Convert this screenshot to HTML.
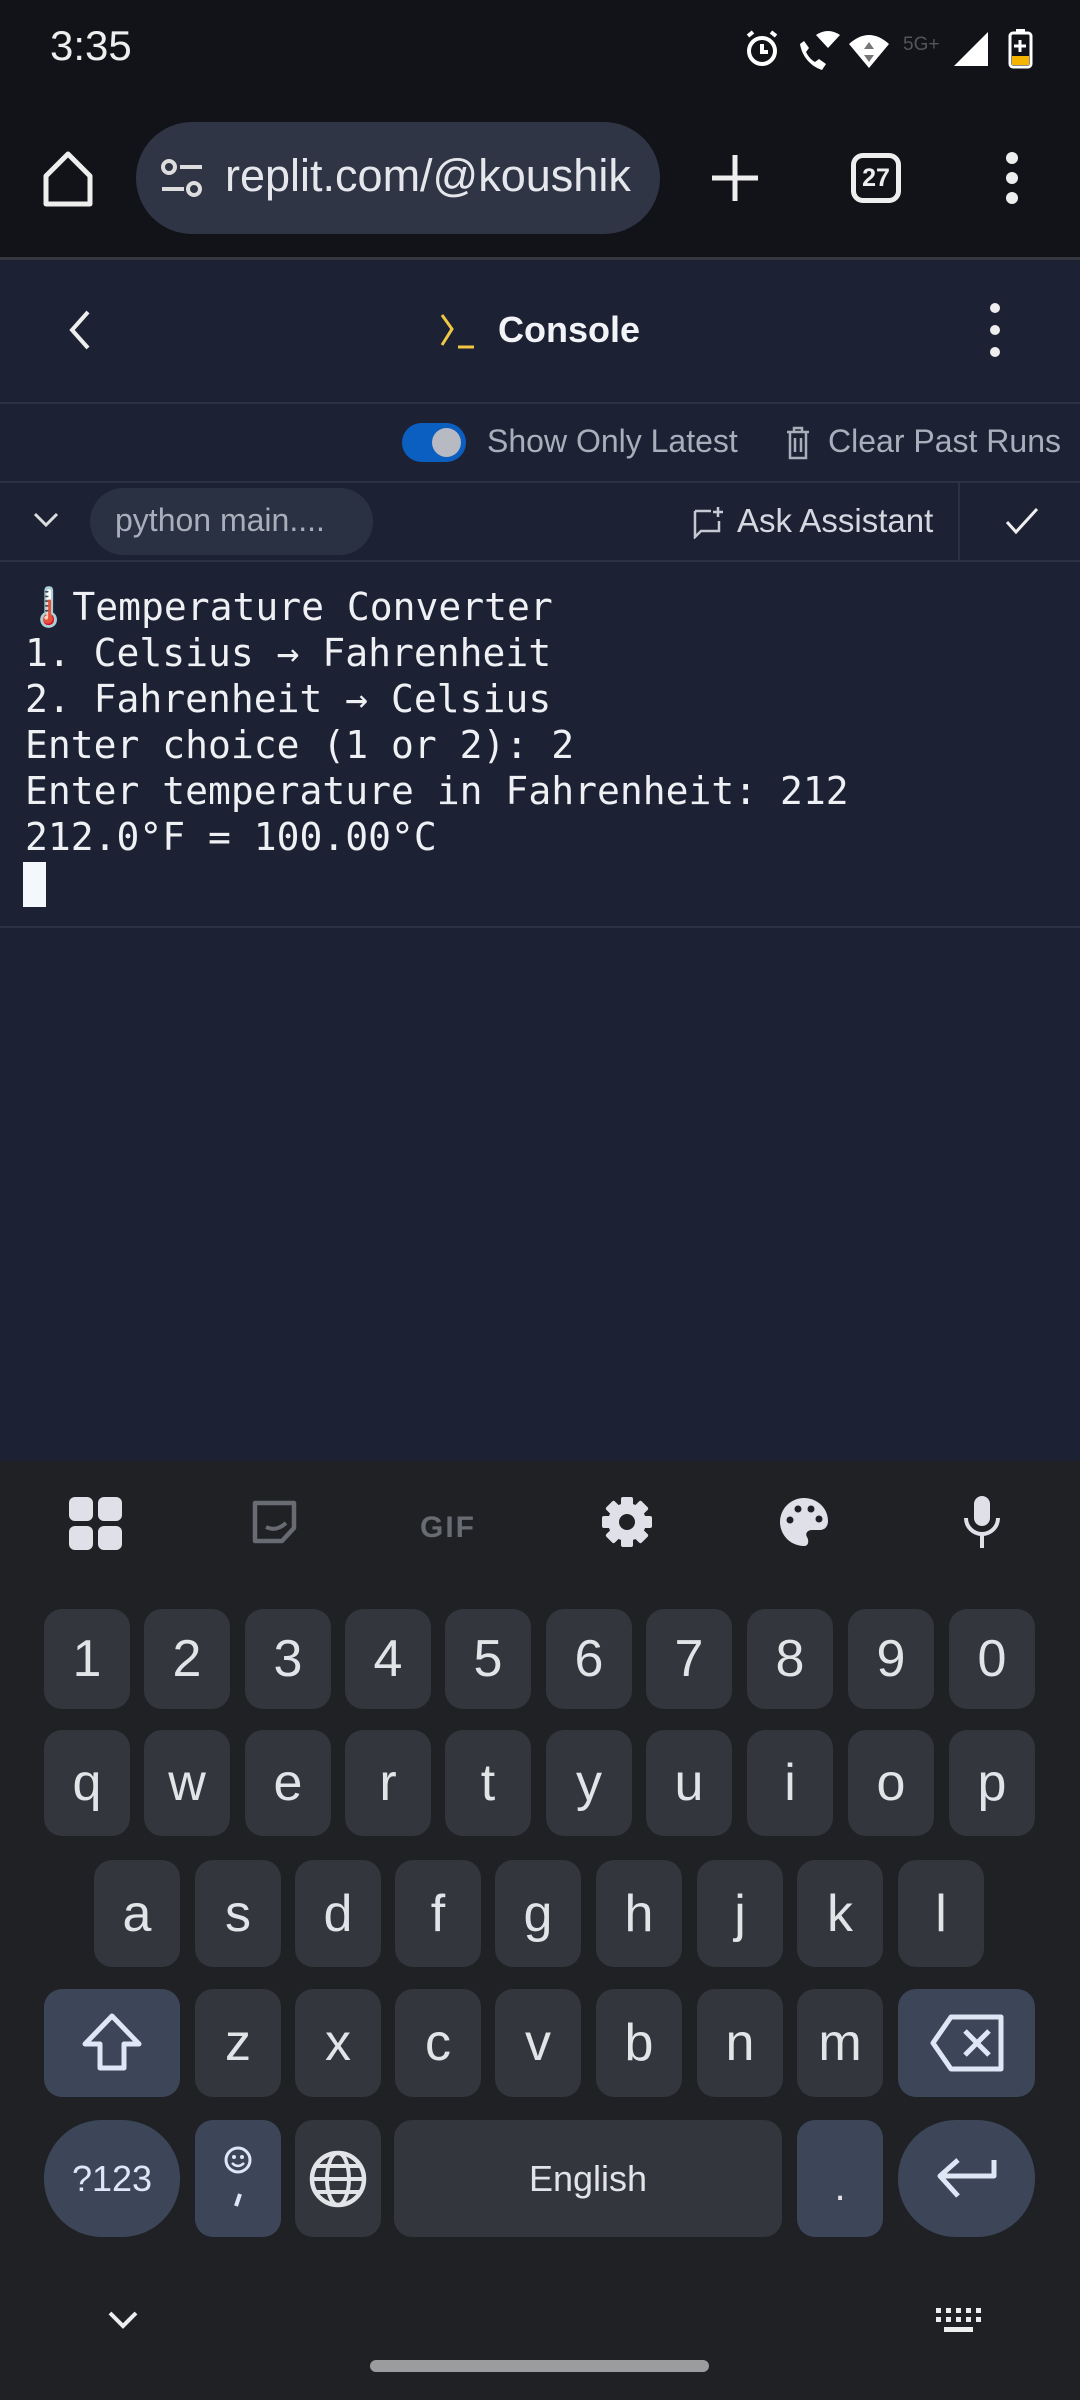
<!DOCTYPE html>
<html><head><meta charset="utf-8"><style>
*{margin:0;padding:0;box-sizing:border-box}
body{width:1080px;height:2400px;background:#1f2125;position:relative;overflow:hidden;font-family:"Liberation Sans",sans-serif}
.a{position:absolute}
.key{position:absolute;background:#33363c;border-radius:18px;color:#e3e4e8;font-size:52px;display:flex;align-items:center;justify-content:center}
.sp{background:#3c4658}
.mono{font-family:"DejaVu Sans Mono","Liberation Mono",monospace;font-size:38px;color:#eef0f4;line-height:46px;white-space:pre}
</style></head><body>
<div class="a" style="left:0;top:0;width:1080px;height:257px;background:#111318"></div>
<div class="a" style="left:50px;top:22px;color:#eee;font-size:42px">3:35</div>
<svg class="a" style="left:735px;top:26px" width="310" height="48" viewBox="735 26 310 48">
 <circle cx="762" cy="51" r="13" fill="none" stroke="#fff" stroke-width="4"/><path d="M762 44v8h6M748 36l5-4M776 36l-5-4" stroke="#fff" stroke-width="4" fill="none"/>
 <path d="M800 44c2 12 10 22 22 26l4-6-7-5-4 3c-4-2-7-6-9-10l3-4-5-7z" fill="#fff"/><path d="M816 35q12-8 24 0l-12 13z" fill="#fff"/>
 <path d="M849 44q20-18 40 0l-20 24z" fill="#fff"/><path d="M869 42l5 7h-10zM869 62l5-7h-10z" fill="#777"/>
 <text x="903" y="50" fill="#555" font-size="19" font-family="Liberation Sans">5G+</text>
 <path d="M954 66l34-34v34z" fill="#fff"/>
 <rect x="1010" y="33" width="21" height="34" rx="3" fill="none" stroke="#fff" stroke-width="3"/><rect x="1016" y="29" width="9" height="5" fill="#fff"/><rect x="1012" y="56" width="17" height="9" fill="#f5b400"/><path d="M1020 40v12M1014 46h12" stroke="#fff" stroke-width="3"/>
</svg>
<svg class="a" style="left:40px;top:148px" width="56" height="60" viewBox="0 0 56 60"><path d="M6 56V28L28 6l22 22v28z" fill="none" stroke="#eee" stroke-width="5" stroke-linejoin="round"/></svg>
<div class="a" style="left:136px;top:122px;width:524px;height:112px;border-radius:56px;background:#2f3544"></div>
<svg class="a" style="left:160px;top:158px" width="44" height="40" viewBox="0 0 44 40"><circle cx="9" cy="9" r="6" fill="none" stroke="#ddd" stroke-width="4"/><path d="M20 9h22M2 31h22" stroke="#ddd" stroke-width="4"/><circle cx="34" cy="31" r="6" fill="none" stroke="#ddd" stroke-width="4"/></svg>
<div class="a" style="left:225px;top:150px;color:#e6e7ec;font-size:45px">replit.com/@koushik</div>
<svg class="a" style="left:710px;top:153px" width="50" height="50"><path d="M25 2v46M2 25h46" stroke="#eee" stroke-width="5"/></svg>
<div class="a" style="left:851px;top:153px;width:50px;height:50px;border:5px solid #eee;border-radius:12px;color:#eee;font-size:25px;font-weight:bold;text-align:center;line-height:40px">27</div>
<svg class="a" style="left:1000px;top:150px" width="24" height="56"><circle cx="12" cy="8" r="6" fill="#eee"/><circle cx="12" cy="28" r="6" fill="#eee"/><circle cx="12" cy="48" r="6" fill="#eee"/></svg>
<div class="a" style="left:0;top:257px;width:1080px;height:3px;background:#34373d"></div>
<div class="a" style="left:0;top:260px;width:1080px;height:1201px;background:#1c2233"></div>
<svg class="a" style="left:64px;top:308px" width="30" height="44"><path d="M24 4L8 22l16 18" fill="none" stroke="#eee" stroke-width="4"/></svg>
<svg class="a" style="left:440px;top:313px" width="40" height="40"><path d="M2 2l10 14-10 16" fill="none" stroke="#f2c744" stroke-width="3"/><path d="M18 34h16" stroke="#f2c744" stroke-width="3"/></svg>
<div class="a" style="left:498px;top:309px;color:#f2f3f6;font-size:36px;font-weight:bold">Console</div>
<svg class="a" style="left:984px;top:300px" width="24" height="60"><circle cx="11" cy="8" r="5" fill="#eee"/><circle cx="11" cy="30" r="5" fill="#eee"/><circle cx="11" cy="52" r="5" fill="#eee"/></svg>
<div class="a" style="left:0;top:402px;width:1080px;height:2px;background:#2b3243"></div>
<div class="a" style="left:402px;top:423px;width:64px;height:39px;border-radius:20px;background:#0b5fc0"></div>
<div class="a" style="left:432px;top:428px;width:29px;height:29px;border-radius:50%;background:#b7bac2"></div>
<div class="a" style="left:487px;top:423px;color:#a9aebb;font-size:32px">Show Only Latest</div>
<svg class="a" style="left:784px;top:425px" width="28" height="36"><path d="M3 7h22M10 7V3h8v4M6 7v26h16V7M11 13v14M17 13v14" fill="none" stroke="#a9aebb" stroke-width="2.5"/></svg>
<div class="a" style="left:828px;top:423px;color:#a9aebb;font-size:32px">Clear Past Runs</div>
<div class="a" style="left:0;top:481px;width:1080px;height:2px;background:#2b3243"></div>
<svg class="a" style="left:32px;top:510px" width="28" height="20"><path d="M3 4l11 11 11-11" fill="none" stroke="#ddd" stroke-width="3"/></svg>
<div class="a" style="left:90px;top:488px;width:283px;height:67px;border-radius:34px;background:#2a3142"></div>
<div class="a" style="left:115px;top:502px;color:#a9aebb;font-size:32px">python main....</div>
<svg class="a" style="left:692px;top:505px" width="32" height="34"><path d="M3 6h16M3 6v26l6-6h18V16" fill="none" stroke="#c5c9d3" stroke-width="2.5"/><path d="M26 2v10M21 7h10" stroke="#c5c9d3" stroke-width="2.5"/></svg>
<div class="a" style="left:737px;top:502px;color:#d5d8e0;font-size:33px">Ask Assistant</div>
<div class="a" style="left:958px;top:483px;width:2px;height:78px;background:#2b3243"></div>
<svg class="a" style="left:1004px;top:506px" width="36" height="30"><path d="M3 16l9 10 21-23" fill="none" stroke="#eee" stroke-width="3"/></svg>
<div class="a" style="left:0;top:560px;width:1080px;height:2px;background:#2b3243"></div>
<div class="a mono" style="left:25px;top:584px">🌡️Temperature Converter
1. Celsius → Fahrenheit
2. Fahrenheit → Celsius
Enter choice (1 or 2): 2
Enter temperature in Fahrenheit: 212
212.0°F = 100.00°C</div>
<div class="a" style="left:23px;top:862px;width:23px;height:45px;background:#f4f7fb"></div>
<div class="a" style="left:0;top:926px;width:1080px;height:2px;background:#2b3243"></div>
<svg class="a" style="left:0;top:1490px" width="1080" height="70" viewBox="0 1490 1080 70">
 <rect x="69" y="1497" width="24" height="24" rx="6" fill="#e0e1e8"/><rect x="98" y="1497" width="24" height="24" rx="6" fill="#e0e1e8"/><rect x="69" y="1526" width="24" height="24" rx="6" fill="#e0e1e8"/><rect x="98" y="1526" width="24" height="24" rx="6" fill="#e0e1e8"/>
 <path d="M255 1503h39v25l-12 13h-27z" fill="none" stroke="#686b72" stroke-width="4.5" stroke-linejoin="round"/><path d="M266 1527q10 5 20-4" stroke="#686b72" stroke-width="4" fill="none"/>
 <text x="420" y="1537" fill="#686b72" font-size="30" font-weight="bold" font-family="Liberation Sans" letter-spacing="2">GIF</text>
 <g fill="#e0e1e8" transform="translate(627 1522)">
  <circle r="19"/>
  <rect x="-6" y="-25" width="12" height="12" rx="2"/>
  <rect x="-6" y="-25" width="12" height="12" rx="2" transform="rotate(45)"/>
  <rect x="-6" y="-25" width="12" height="12" rx="2" transform="rotate(90)"/>
  <rect x="-6" y="-25" width="12" height="12" rx="2" transform="rotate(135)"/>
  <rect x="-6" y="-25" width="12" height="12" rx="2" transform="rotate(180)"/>
  <rect x="-6" y="-25" width="12" height="12" rx="2" transform="rotate(225)"/>
  <rect x="-6" y="-25" width="12" height="12" rx="2" transform="rotate(270)"/>
  <rect x="-6" y="-25" width="12" height="12" rx="2" transform="rotate(315)"/>
  <circle r="8" fill="#1f2125"/>
 </g>
 <path d="M804 1498a24 24 0 1 0 0 48c5 0 5-6 3-9s0-7 5-7h8c5 0 8-4 8-9 0-13-11-23-24-23z" fill="#e0e1e8"/><circle cx="790" cy="1520" r="3.5" fill="#1f2125"/><circle cx="798" cy="1509" r="3.5" fill="#1f2125"/><circle cx="811" cy="1509" r="3.5" fill="#1f2125"/><circle cx="819" cy="1519" r="3.5" fill="#1f2125"/>
 <rect x="974" y="1496" width="16" height="30" rx="8" fill="#e0e1e8"/><path d="M966 1518a16 16 0 0 0 32 0M982 1534v14" fill="none" stroke="#e0e1e8" stroke-width="4"/>
</svg>
<div class="key" style="left:44px;top:1609px;width:86px;height:100px">1</div>
<div class="key" style="left:144px;top:1609px;width:86px;height:100px">2</div>
<div class="key" style="left:245px;top:1609px;width:86px;height:100px">3</div>
<div class="key" style="left:345px;top:1609px;width:86px;height:100px">4</div>
<div class="key" style="left:445px;top:1609px;width:86px;height:100px">5</div>
<div class="key" style="left:546px;top:1609px;width:86px;height:100px">6</div>
<div class="key" style="left:646px;top:1609px;width:86px;height:100px">7</div>
<div class="key" style="left:747px;top:1609px;width:86px;height:100px">8</div>
<div class="key" style="left:848px;top:1609px;width:86px;height:100px">9</div>
<div class="key" style="left:949px;top:1609px;width:86px;height:100px">0</div>
<div class="key" style="left:44px;top:1730px;width:86px;height:106px">q</div>
<div class="key" style="left:144px;top:1730px;width:86px;height:106px">w</div>
<div class="key" style="left:245px;top:1730px;width:86px;height:106px">e</div>
<div class="key" style="left:345px;top:1730px;width:86px;height:106px">r</div>
<div class="key" style="left:445px;top:1730px;width:86px;height:106px">t</div>
<div class="key" style="left:546px;top:1730px;width:86px;height:106px">y</div>
<div class="key" style="left:646px;top:1730px;width:86px;height:106px">u</div>
<div class="key" style="left:747px;top:1730px;width:86px;height:106px">i</div>
<div class="key" style="left:848px;top:1730px;width:86px;height:106px">o</div>
<div class="key" style="left:949px;top:1730px;width:86px;height:106px">p</div>
<div class="key" style="left:94px;top:1860px;width:86px;height:107px">a</div>
<div class="key" style="left:195px;top:1860px;width:86px;height:107px">s</div>
<div class="key" style="left:295px;top:1860px;width:86px;height:107px">d</div>
<div class="key" style="left:395px;top:1860px;width:86px;height:107px">f</div>
<div class="key" style="left:495px;top:1860px;width:86px;height:107px">g</div>
<div class="key" style="left:596px;top:1860px;width:86px;height:107px">h</div>
<div class="key" style="left:697px;top:1860px;width:86px;height:107px">j</div>
<div class="key" style="left:797px;top:1860px;width:86px;height:107px">k</div>
<div class="key" style="left:898px;top:1860px;width:86px;height:107px">l</div>
<div class="key sp" style="left:44px;top:1989px;width:136px;height:108px"><svg width="66" height="62"><path d="M33 4L6 32h15v24h24V32h15z" fill="none" stroke="#dfe6f5" stroke-width="5" stroke-linejoin="round"/></svg></div>
<div class="key" style="left:195px;top:1989px;width:86px;height:108px">z</div>
<div class="key" style="left:295px;top:1989px;width:86px;height:108px">x</div>
<div class="key" style="left:395px;top:1989px;width:86px;height:108px">c</div>
<div class="key" style="left:495px;top:1989px;width:86px;height:108px">v</div>
<div class="key" style="left:596px;top:1989px;width:86px;height:108px">b</div>
<div class="key" style="left:697px;top:1989px;width:86px;height:108px">n</div>
<div class="key" style="left:797px;top:1989px;width:86px;height:108px">m</div>
<div class="key sp" style="left:898px;top:1989px;width:137px;height:108px"><svg width="76" height="60"><path d="M22 4h50v52H22L4 30z" fill="none" stroke="#dfe6f5" stroke-width="5" stroke-linejoin="round"/><path d="M36 18l24 24M60 18L36 42" stroke="#dfe6f5" stroke-width="5"/></svg></div>
<div class="key sp" style="left:44px;top:2120px;width:136px;height:117px;border-radius:58px;font-size:36px;color:#dfe6f5">?123</div>
<div class="key sp" style="left:195px;top:2120px;width:86px;height:117px"><svg width="40" height="70"><circle cx="20" cy="16" r="12" fill="none" stroke="#dfe6f5" stroke-width="3"/><circle cx="16" cy="13" r="2" fill="#dfe6f5"/><circle cx="24" cy="13" r="2" fill="#dfe6f5"/><path d="M14 19q6 6 12 0" stroke="#dfe6f5" stroke-width="2.5" fill="none"/><path d="M22 50l-4 12" stroke="#dfe6f5" stroke-width="4"/></svg></div>
<div class="key" style="left:295px;top:2120px;width:86px;height:117px"><svg width="60" height="60"><circle cx="30" cy="30" r="26" fill="none" stroke="#e3e4e8" stroke-width="4.5"/><ellipse cx="30" cy="30" rx="11" ry="26" fill="none" stroke="#e3e4e8" stroke-width="4"/><path d="M4 30h52M8 17h44M8 43h44" stroke="#e3e4e8" stroke-width="4"/></svg></div>
<div class="key" style="left:394px;top:2120px;width:388px;height:117px;font-size:36px">English</div>
<div class="key sp" style="left:797px;top:2120px;width:86px;height:117px;font-size:40px;padding-top:18px">.</div>
<div class="key sp" style="left:898px;top:2120px;width:137px;height:117px;border-radius:58px"><svg width="66" height="46"><path d="M60 4v16H8M24 4L6 20l18 20" fill="none" stroke="#dfe6f5" stroke-width="5" stroke-linejoin="round"/></svg></div>
<svg class="a" style="left:106px;top:2308px" width="34" height="24"><path d="M4 5l13 13 13-13" fill="none" stroke="#eee" stroke-width="4"/></svg>
<svg class="a" style="left:936px;top:2308px" width="46" height="28"><g fill="#eee"><rect x="0" y="0" width="5" height="5"/><rect x="10" y="0" width="5" height="5"/><rect x="20" y="0" width="5" height="5"/><rect x="30" y="0" width="5" height="5"/><rect x="40" y="0" width="5" height="5"/><rect x="0" y="9" width="5" height="5"/><rect x="10" y="9" width="5" height="5"/><rect x="20" y="9" width="5" height="5"/><rect x="30" y="9" width="5" height="5"/><rect x="40" y="9" width="5" height="5"/><rect x="8" y="19" width="29" height="5"/></g></svg>
<div class="a" style="left:370px;top:2360px;width:339px;height:12px;border-radius:6px;background:#9b9c9e"></div>
</body></html>
